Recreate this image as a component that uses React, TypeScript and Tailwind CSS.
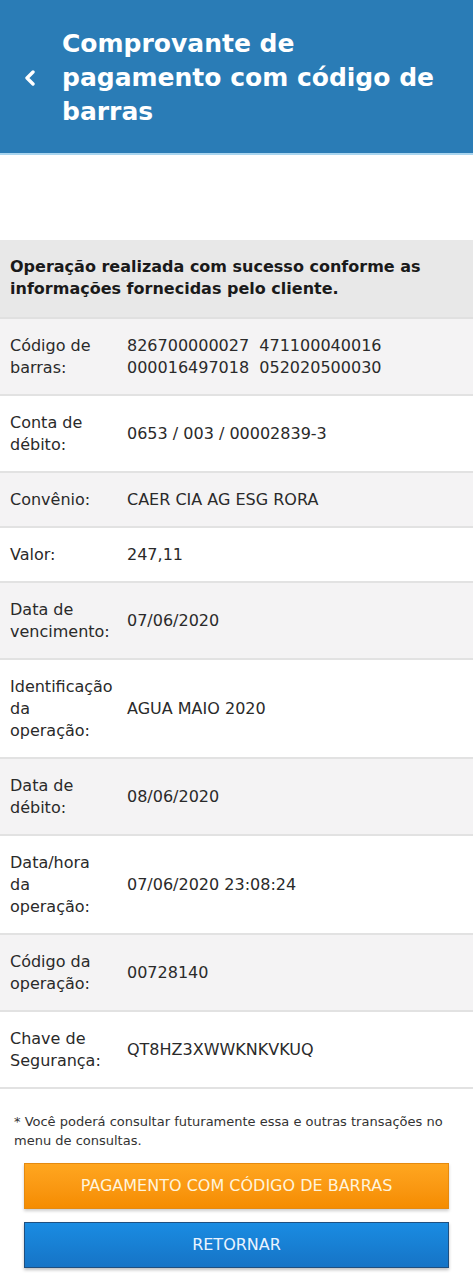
const rows: { label: string; value: string[] }[] = [
  { label: "Código de barras:", value: ["826700000027  471100040016", "000016497018  052020500030"] },
  { label: "Conta de débito:", value: ["0653 / 003 / 00002839-3"] },
  { label: "Convênio:", value: ["CAER CIA AG ESG RORA"] },
  { label: "Valor:", value: ["247,11"] },
  { label: "Data de vencimento:", value: ["07/06/2020"] },
  { label: "Identificação da operação:", value: ["AGUA MAIO 2020"] },
  { label: "Data de débito:", value: ["08/06/2020"] },
  { label: "Data/hora da operação:", value: ["07/06/2020 23:08:24"] },
  { label: "Código da operação:", value: ["00728140"] },
  { label: "Chave de Segurança:", value: ["QT8HZ3XWWKNKVKUQ"] },
];

export default function App() {
  return (
    <div className="min-h-[1280px] w-[473px] bg-white font-['DejaVu_Sans',sans-serif] text-[#2a2a2a]">
      <header className="flex items-center border-b-2 border-[#a9d5ef] bg-[#2a7cb6] pb-[24px] pl-[24px] pr-3 pt-[27px]">
        <svg viewBox="0 0 12 16" className="mr-[26px] h-[16px] w-[12px] shrink-0" fill="none">
          <polyline
            points="9,2 3,8 9,14"
            stroke="white"
            strokeWidth="3.4"
            strokeLinecap="round"
            strokeLinejoin="round"
          />
        </svg>
        <h1 className="text-[25px] font-bold leading-[34px] text-white">
          Comprovante de pagamento com código de barras
        </h1>
      </header>

      <div className="h-[85px]" />

      <div className="border-b-2 border-[#e0e0e0] bg-[#e8e8e8] px-[10px] pb-[17px] pt-[16px] text-[16px] font-bold leading-[22px] text-[#1a1a1a]">
        Operação realizada com sucesso conforme as informações fornecidas pelo cliente.
      </div>

      {rows.map((row, i) => (
        <div
          key={row.label}
          className={`grid grid-cols-[104px_1fr] items-center gap-x-[13px] border-b-2 border-[#e2e2e2] px-[10px] pb-[15px] pt-[16px] text-[16px] leading-[22px] ${
            i % 2 === 0 ? "bg-[#f4f3f4]" : "bg-white"
          }`}
        >
          <div>{row.label}</div>
          <div className="whitespace-pre">
            {row.value.map((line) => (
              <div key={line}>{line}</div>
            ))}
          </div>
        </div>
      ))}

      <p className="px-[14px] pt-[23px] text-[13px] leading-[19px] text-[#333]">
        * Você poderá consultar futuramente essa e outras transações no menu de consultas.
      </p>

      <div className="flex flex-col gap-[13px] px-[24px] pt-[13px]">
        <button
          type="button"
          className="h-[46px] border border-[#e58a10] bg-gradient-to-b from-[#ffa61f] to-[#f58c00] text-[16px] uppercase text-[#fff4dc] shadow-[0_2px_3px_rgba(0,0,0,0.2)]"
        >
          Pagamento com código de barras
        </button>
        <button
          type="button"
          className="h-[46px] border border-[#1f4f7f] bg-gradient-to-b from-[#1a8ce2] to-[#1674c6] text-[16px] uppercase text-[#eaf4ff] shadow-[0_2px_3px_rgba(0,0,0,0.25)]"
        >
          Retornar
        </button>
      </div>
    </div>
  );
}
